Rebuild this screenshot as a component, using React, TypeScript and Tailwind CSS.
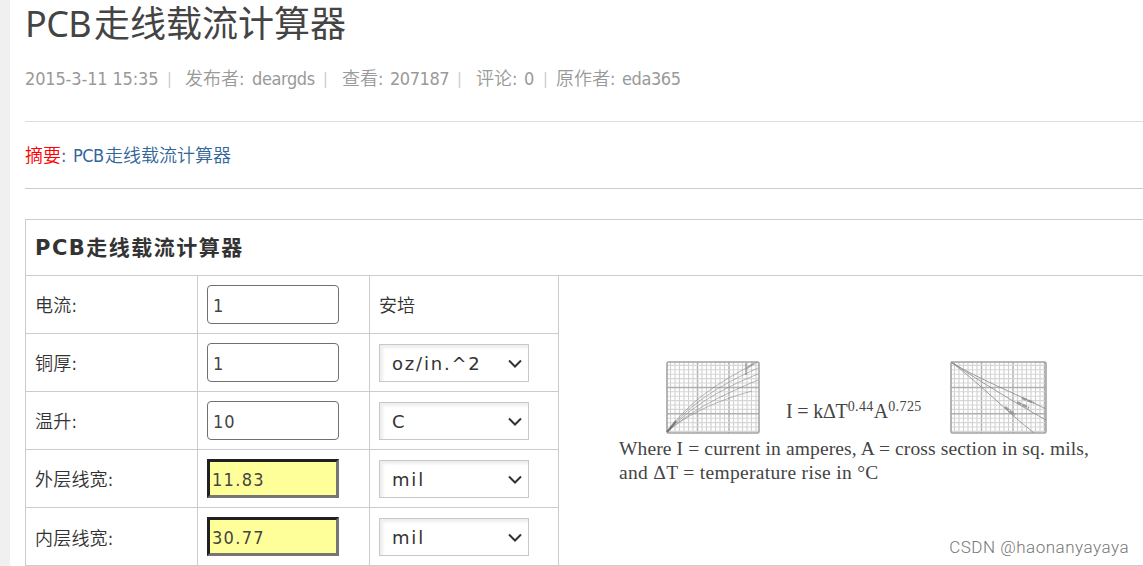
import React, { useState } from "react";

const rows = [
  { id: "current", label: "电流:", value: "1", unit: null, result: false },
  { id: "copper", label: "铜厚:", value: "1", unit: ["oz/in.^2", "mil", "mm"], result: false },
  { id: "temp", label: "温升:", value: "10", unit: ["C", "F"], result: false },
  { id: "outer", label: "外层线宽:", value: "11.83", unit: ["mil", "mm"], result: true },
  { id: "inner", label: "内层线宽:", value: "30.77", unit: ["mil", "mm"], result: true },
];

// Graph paper with a few darker major lines
function GraphPaper({ width, height, children }: { width: number; height: number; children: React.ReactNode }) {
  const cols = Array.from({ length: Math.floor(width / 4.5) }, (_, i) => (i + 1) * 4.5);
  const lines = Array.from({ length: Math.floor(height / 4.4) }, (_, i) => (i + 1) * 4.4);
  return (
    <svg width={width} height={height} viewBox={`0 0 ${width} ${height}`} fill="none" className="shrink-0">
      {cols.map((x, i) => (
        <path key={x} d={`M${x} 1V${height - 1}`} stroke={i % 7 === 6 ? "#b0b0b0" : "#d0d0d0"} strokeWidth={i % 7 === 6 ? 1.5 : 1.1} />
      ))}
      {lines.map((y, i) => (
        <path key={y} d={`M1 ${y}H${width - 1}`} stroke={i % 6 === 5 ? "#b0b0b0" : "#d6d6d6"} strokeWidth={i % 6 === 5 ? 1.5 : 1.1} />
      ))}
      <rect x="1" y="1" width={width - 2} height={height - 2} rx="1.5" stroke="#a3a3a3" strokeWidth="1.6" />
      {children}
    </svg>
  );
}

function UnitSelect({ options }: { options: string[] }) {
  return (
    <div className="relative h-[38px] w-[150px]">
      <select className="block h-full w-full appearance-none border border-[#c8c8c8] bg-white pt-[2px] pl-[12px] font-['DejaVu_Sans',sans-serif] text-[18px] leading-[34px] tracking-[1.8px] text-[#333] shadow-[inset_3px_3px_3px_#eee] outline-none">
        {options.map((o) => (
          <option key={o}>{o}</option>
        ))}
      </select>
      <svg className="pointer-events-none absolute top-[15px] right-[7px]" width="14" height="10" viewBox="0 0 14 10" fill="none">
        <path d="M1 1.5L7 7.5L13 1.5" stroke="#333" strokeWidth="2" />
      </svg>
    </div>
  );
}

export default function App() {
  const [values, setValues] = useState(rows.map((r) => r.value));

  const handleChange = (index: number, value: string) => {
    setValues((prev) => prev.map((v, i) => (i === index ? value : v)));
  };

  return (
    <div className="relative h-[566px] w-[1143px] overflow-hidden border-l-[10px] border-[#f0f0f0] bg-white pl-[15px] font-['DejaVu_Sans_Condensed','Noto_Sans_CJK_SC',sans-serif] text-[18px] text-[#333]">
      <h1 className="h-[48px] whitespace-nowrap font-['Noto_Sans','Noto_Sans_CJK_SC',sans-serif] text-[36px] leading-[48px] text-[#444]">
        <span className="inline-block w-[69px] tracking-[-0.6px]">PCB</span>走线载流计算器
      </h1>

      <div className="flex h-[73px] items-start pt-[19px] leading-[24px] font-[350] whitespace-nowrap text-[#999]">
        <span className="w-[142px] tracking-[-0.15px]">2015-3-11 15:35</span>
        <span className="w-[18px] text-[16px] text-[#ccc]">|</span>
        <span className="w-[67px]">发布者:</span>
        <span className="w-[71px] tracking-[-0.4px]">deargds</span>
        <span className="w-[19px] text-[16px] text-[#ccc]">|</span>
        <span className="w-[48px]">查看:</span>
        <span className="w-[67px] tracking-[-0.45px]">207187</span>
        <span className="w-[19px] text-[16px] text-[#ccc]">|</span>
        <span className="w-[48px]">评论:</span>
        <span className="w-[19px] tracking-[-0.45px]">0</span>
        <span className="w-[13px] text-[16px] text-[#ccc]">|</span>
        <span className="w-[66px]">原作者:</span>
        <span className="tracking-[-0.4px]">eda365</span>
      </div>

      <div className="flex h-[68px] items-center border-y border-t-[#ddd] border-b-[#ccc] pt-px font-[350] whitespace-nowrap text-[#369]">
        <span className="text-[#f00]">摘要</span>
        <span className="w-[12px]">:</span>
        <span className="w-[32px] tracking-[-0.5px]">PCB</span>
        <span>走线载流计算器</span>
      </div>

      <div className="mt-[30px] h-[347px] w-[1140px] border border-[#ccc]">
        <h2 className="flex h-[56px] items-center border-b border-[#ccc] pt-[3px] pl-[9px] font-['DejaVu_Sans','Noto_Sans_CJK_SC',sans-serif] text-[21px] font-bold tracking-[1.5px] whitespace-nowrap">
          PCB走线载流计算器
        </h2>
        <div className="flex">
          <div className="w-[533px] border-r border-[#ccc]">
            {rows.map((row, i) => (
              <div key={row.id} className="flex h-[58px] border-b border-[#ccc] last:border-b-0">
                <label htmlFor={row.id} className="flex w-[172px] items-center border-r border-[#ccc] pt-[2px] pl-[9px] font-[350] tracking-[0.2px]">
                  {row.label}
                </label>
                <div className="w-[172px] border-r border-[#ccc] pt-[9px] pl-[9px]">
                  <input
                    id={row.id}
                    value={values[i]}
                    onChange={(e) => handleChange(i, e.target.value)}
                    className={
                      row.result
                        ? "block h-[39px] w-[132px] border-[3px] border-t-[#202020] border-r-[#767676] border-b-[#767676] border-l-[#202020] bg-[#ff9] pt-[2px] pl-[2px] tracking-[1.3px] text-[#444] outline-none"
                        : "block h-[39px] w-[132px] rounded-[4px] border border-[#707070] bg-white pt-[2px] pl-[5px] tracking-[1px] text-[#444] outline-none"
                    }
                  />
                </div>
                <div className={row.unit ? "pt-[10px] pl-[9px]" : "flex items-center pt-[2px] pl-[9px] font-[350]"}>
                  {row.unit ? <UnitSelect options={row.unit} /> : "安培"}
                </div>
              </div>
            ))}
          </div>

          <div className="flex-1 pt-[85px] pl-[60px] font-['Liberation_Serif',serif] text-[19.5px] whitespace-nowrap text-[#444]">
            <div className="flex h-[76px] pl-[47px]">
              <GraphPaper width={94} height={73}>
                <g stroke="#888" strokeOpacity=".6">
                  <path d="M1 71C22 42 50 22 92 1" />
                  <path d="M1 71C24 43 52 25 92 7" />
                  <path d="M1 71C24 47 52 29 92 13" />
                  <path d="M1 71C24 50 54 35 92 19" />
                  <path d="M1 71C20 54 50 40 86 30" />
                  <path d="M1 71L10 60" stroke="#555" strokeWidth="2" />
                  <path d="M80 2V14M80 8L88 2" strokeWidth="2" />
                </g>
              </GraphPaper>
              <div className="w-[190px] pt-[38px] pl-[26px] text-[20px] leading-[24px]">
                <span className="tracking-[-0.2px]">I = kΔT</span>
                <sup className="top-[-7px] text-[14px] leading-none tracking-[0.4px]">0.44</sup>A
                <sup className="top-[-7px] text-[14px] leading-none tracking-[0.4px]">0.725</sup>
              </div>
              <GraphPaper width={97} height={73}>
                <g stroke="#888" strokeOpacity=".8">
                  <path d="M1 1C28 18 65 32 96 48" />
                  <path d="M1 1C28 19 62 40 96 59" />
                  <path d="M1 1C28 21 56 50 84 72" />
                  <path d="M72 37L84 42M67 41L79 47M55 46L65 54" strokeWidth="2.4" strokeDasharray="5 1" />
                </g>
              </GraphPaper>
            </div>
            <p className="h-[24px] leading-[24px] tracking-[0.13px]">Where I = current in amperes, A = cross section in sq. mils,</p>
            <p className="h-[24px] leading-[24px] tracking-[0.32px]">and ΔT = temperature rise in °C</p>
          </div>
        </div>
      </div>

      <div className="absolute right-[14px] bottom-[8px] font-[Roboto,sans-serif] text-[17px] leading-[22px] font-light tracking-[0.5px] text-[#777]">
        CSDN @haonanyayaya
      </div>
    </div>
  );
}
